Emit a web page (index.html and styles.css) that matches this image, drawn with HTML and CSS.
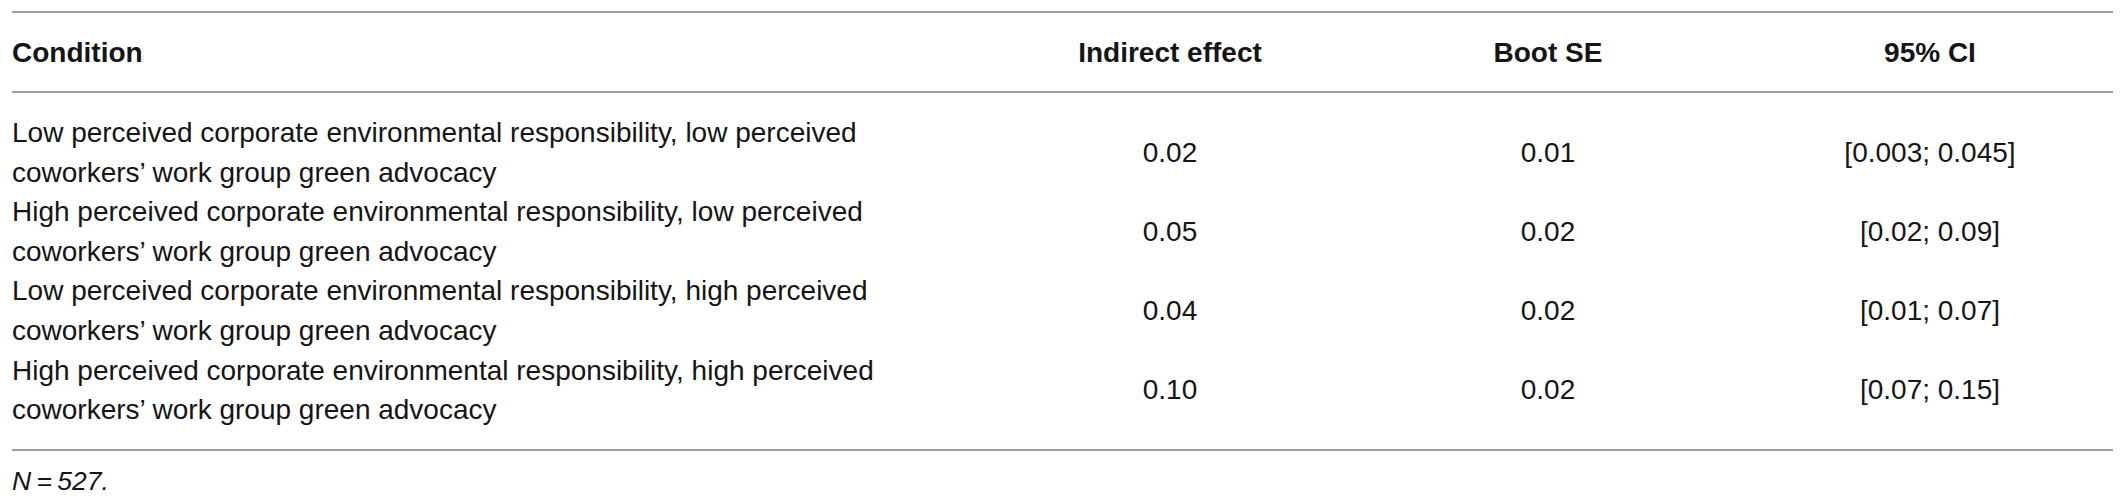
FILE: index.html
```html
<!DOCTYPE html>
<html lang="en">
<head>
<meta charset="utf-8">
<title>Table</title>
<link rel="stylesheet" href="styles.css">
</head>
<body>
<div class="page">
  <div class="table">
    <div class="row head">
      <div class="cell cond">Condition</div>
      <div class="cell num">Indirect effect</div>
      <div class="cell num">Boot SE</div>
      <div class="cell num">95% CI</div>
    </div>
    <div class="tbody">
      <div class="row">
        <div class="cell cond">Low perceived corporate environmental responsibility, low perceived coworkers’ work group green advocacy</div>
        <div class="cell num">0.02</div>
        <div class="cell num">0.01</div>
        <div class="cell num">[0.003; 0.045]</div>
      </div>
      <div class="row">
        <div class="cell cond">High perceived corporate environmental responsibility, low perceived coworkers’ work group green advocacy</div>
        <div class="cell num">0.05</div>
        <div class="cell num">0.02</div>
        <div class="cell num">[0.02; 0.09]</div>
      </div>
      <div class="row">
        <div class="cell cond">Low perceived corporate environmental responsibility, high perceived coworkers’ work group green advocacy</div>
        <div class="cell num">0.04</div>
        <div class="cell num">0.02</div>
        <div class="cell num">[0.01; 0.07]</div>
      </div>
      <div class="row">
        <div class="cell cond">High perceived corporate environmental responsibility, high perceived coworkers’ work group green advocacy</div>
        <div class="cell num">0.10</div>
        <div class="cell num">0.02</div>
        <div class="cell num">[0.07; 0.15]</div>
      </div>
    </div>
  </div>
  <p class="note"><i>N</i>&#8201;=&#8201;<i>527.</i></p>
</div>
</body>
</html>
```

FILE: styles.css
```css
html, body {
  margin: 0;
  padding: 0;
  background: #ffffff;
}

body {
  font-family: "Liberation Sans", Arial, sans-serif;
  color: #151515;
}

.page {
  padding: 11px 13px 0 12px;
}

.table {
  width: 2101px;
  border-top: 2px solid #9c9c9c;
  border-bottom: 2px solid #9c9c9c;
}

.row {
  display: grid;
  grid-template-columns: 979px 358px 398px 366px;
  align-items: center;
  font-size: 28px;
  line-height: 39.6px;
}

.head {
  font-weight: bold;
  padding: 20px 0 18px;
  border-bottom: 2px solid #9c9c9c;
}

.tbody {
  padding: 20.5px 0 19px;
}

.cell.cond {
  padding-right: 60px;
}

.cell.num {
  text-align: center;
}

.note {
  margin: 11px 0 0;
  font-size: 26.5px;
  line-height: 39.6px;
  font-style: italic;
}
```
